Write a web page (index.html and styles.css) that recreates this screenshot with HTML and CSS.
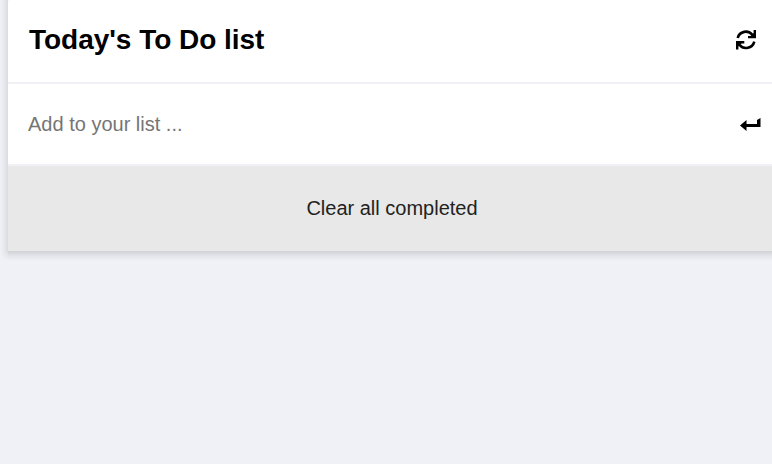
FILE: index.html
```html
<!DOCTYPE html>
<html lang="en">
<head>
<meta charset="utf-8">
<title>To Do list</title>
<link rel="stylesheet" href="styles.css">
</head>
<body>
<div class="frame">
<main class="todo">
  <header class="todo-header">
    <h1>Today's To Do list</h1>
    <svg class="refresh" viewBox="0 0 20 20"><path d="M1.7 8A8.4 8.4 0 0 1 16.5 5M18.3 11.7A8.4 8.4 0 0 1 3.5 14.7" fill="none" stroke="#000" stroke-width="2.6"/><path d="M20 0V8.3H12V6H14.5L17.6 3V0ZM0 19.5V11H8.3V13.4H5.5L2.4 16.5V19.5Z"/></svg>
  </header>
  <form class="todo-add">
    <input type="text" placeholder="Add to your list ...">
    <svg class="enter" viewBox="0 0 21 13"><path d="M0 7.5 6.5 2V6H17V2L20.5 0V9H6.5V13Z"/></svg>
  </form>
  <button class="clear" type="button">Clear all completed</button>
</main>
</div>
</body>
</html>
```

FILE: styles.css
```css
* { box-sizing: border-box; }
html { overflow: hidden; background: #f0f1f6; }
body {
  margin: 0;
  font-family: "Liberation Sans", Arial, sans-serif;
}
/* Soft shade along the card's left and bottom edges */
.frame {
  padding: 0 0 10px 8px;
  background:
    radial-gradient(ellipse 8px 10px at 8px calc(100% - 10px), rgba(0, 0, 0, .09), rgba(0, 0, 0, .035) 50%, transparent) 0 100% / 8px 10px no-repeat,
    linear-gradient(to left, rgba(0, 0, 0, .09), rgba(0, 0, 0, .035) 50%, transparent) 0 0 / 8px calc(100% - 10px) no-repeat,
    linear-gradient(to bottom, rgba(0, 0, 0, .13), rgba(0, 0, 0, .05) 50%, transparent) 8px 100% / 100% 10px no-repeat;
}
.todo {
  width: 768px;
  height: 251px;
  background: #fff;
  border-radius: 2px 2px 0 0;
}
.todo-header, .todo-add {
  display: flex;
  align-items: center;
  justify-content: space-between;
  border-bottom: 2px solid #f0f1f6;
}
.todo-header { height: 84px; padding: 0 20px 3px 21px; }
.todo-add { height: 82px; padding: 0 15px 0 20px; }
h1 { margin: 0; font-size: 28px; letter-spacing: -.03px; }
.refresh { width: 20px; height: 20px; }
.enter { width: 21px; height: 13px; }
input {
  flex: 1;
  padding: 0;
  border: 0;
  outline: 0;
  font: 20px "Liberation Sans", Arial, sans-serif;
}
.clear {
  display: block;
  width: 100%;
  height: 85px;
  padding: 0;
  border: 0;
  background: #e8e8e8;
  color: #222;
  font: 20px "Liberation Sans", Arial, sans-serif;
}
```
